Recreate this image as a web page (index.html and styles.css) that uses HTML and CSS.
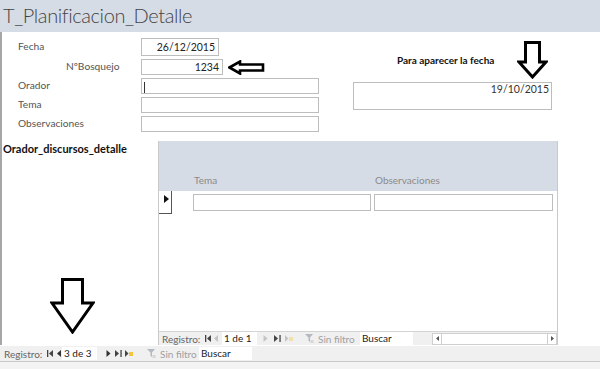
FILE: index.html
```html
<!DOCTYPE html>
<html lang="es">
<head>
  <meta charset="UTF-8" />
  <title>T_Planificacion_Detalle</title>
  <link rel="stylesheet" href="styles.css">
</head>
<body>
  <div class="window">
    <header class="title">T_Planificacion_Detalle</header>

    <main class="form">
      <!-- Cabecera del formulario -->
      <section class="top">
        <div class="fields">
          <div class="row row-tall">
            <label class="lbl">Fecha</label>
            <div class="box w-fecha num">26/12/2015</div>
          </div>
          <div class="row">
            <label class="lbl lbl-indent">NºBosquejo</label>
            <div class="box w-bosq num">1234</div>
          </div>
          <div class="row">
            <label class="lbl">Orador</label>
            <div class="box w-long focus"><span class="caret"></span></div>
          </div>
          <div class="row">
            <label class="lbl">Tema</label>
            <div class="box w-long"></div>
          </div>
          <div class="row">
            <label class="lbl">Observaciones</label>
            <div class="box w-long"></div>
          </div>
        </div>

        <div class="date-note">
          <div class="note-title">Para aparecer la fecha</div>
          <div class="note-box">19/10/2015</div>
        </div>

        <svg class="arrow arrow-left" width="37" height="15" viewBox="0 0 37 15">
          <path d="M1.5 7.5 L12 1.5 V4.5 H35 V10.5 H12 V13.5 Z" fill="#fff" stroke="#000" stroke-width="2.6"/>
        </svg>
        <svg class="arrow arrow-date" width="31" height="38" viewBox="0 0 31 38">
          <path d="M8.5 1.5 H22.5 V21 H29 L15.5 36 L2 21 H8.5 Z" fill="#fff" stroke="#000" stroke-width="3"/>
        </svg>
      </section>

      <!-- Subformulario -->
      <section class="detail">
        <h2 class="sub-label">Orador_discursos_detalle</h2>

        <div class="subform">
          <div class="sub-head">
            <span class="col-tema">Tema</span>
            <span class="col-obs">Observaciones</span>
          </div>
          <div class="sub-row">
            <div class="selector">
              <svg width="5" height="8" viewBox="0 0 5 8"><path d="M0 0 L5 4 L0 8 Z" fill="#111"/></svg>
            </div>
            <div class="cell cell-tema"></div>
            <div class="cell cell-obs"></div>
          </div>
          <div class="sub-space"></div>

          <div class="navbar sub-nav">
            <span class="nav-text">Registro:</span>
            <svg class="ico i-first" width="6" height="7" viewBox="0 0 6 7"><rect x="0" y="0" width="1.3" height="7" fill="#444"/><path d="M6 0 L2 3.5 L6 7 Z" fill="#444"/></svg>
            <svg class="ico i-prev" width="4" height="7" viewBox="0 0 4 7"><path d="M4 0 L0 3.5 L4 7 Z" fill="#c4c4c4"/></svg>
            <span class="nav-input w-rec">1 de 1</span>
            <svg class="ico i-next" width="5" height="7" viewBox="0 0 5 7"><path d="M0.5 0 L4.5 3.5 L0.5 7 Z" fill="#c4c4c4"/></svg>
            <svg class="ico i-last" width="7" height="7" viewBox="0 0 7 7"><path d="M0 0 L4 3.5 L0 7 Z" fill="#444"/><rect x="5.4" y="0" width="1.3" height="7" fill="#444"/></svg>
            <svg class="ico i-new" width="8" height="7" viewBox="0 0 8 7"><path d="M0 0 L3.5 3.5 L0 7 Z" fill="#c4c4c4"/><rect x="4" y="2" width="4" height="4" fill="#f1dfae"/></svg>
            <svg class="ico i-filter" width="9" height="9" viewBox="0 0 9 9"><path d="M0 0 H8 L5 3.5 V8 L3.5 7 V3.5 Z" fill="#b4b8c0"/><path d="M5.5 6 L8.5 9 M8.5 6 L5.5 9" stroke="#c4c4c4" stroke-width="1"/></svg>
            <span class="nav-text off-text">Sin filtro</span>
            <span class="nav-input w-search">Buscar</span>
            <span class="scroll">
              <span class="scroll-btn"><svg width="3" height="5" viewBox="0 0 3 5"><path d="M3 0 L0 2.5 L3 5 Z" fill="#555"/></svg></span>
              <span class="scroll-track"></span>
              <span class="scroll-btn"><svg width="3" height="5" viewBox="0 0 3 5"><path d="M0 0 L3 2.5 L0 5 Z" fill="#555"/></svg></span>
            </span>
          </div>
        </div>

        <svg class="arrow arrow-nav" width="45" height="56" viewBox="0 0 45 56">
          <path d="M12.5 1.5 H32.5 V25 H43 L22.5 54 L2 25 H12.5 Z" fill="#fff" stroke="#000" stroke-width="3"/>
        </svg>
      </section>
    </main>

    <footer class="navbar main-nav">
      <span class="nav-text">Registro:</span>
      <svg class="ico i-first" width="6" height="7" viewBox="0 0 6 7"><rect x="0" y="0" width="1.3" height="7" fill="#444"/><path d="M6 0 L2 3.5 L6 7 Z" fill="#444"/></svg>
      <svg class="ico i-prev" width="4" height="7" viewBox="0 0 4 7"><path d="M4 0 L0 3.5 L4 7 Z" fill="#333"/></svg>
      <span class="nav-input w-rec">3 de 3</span>
      <svg class="ico i-next" width="5" height="7" viewBox="0 0 5 7"><path d="M0.5 0 L4.5 3.5 L0.5 7 Z" fill="#333"/></svg>
      <svg class="ico i-last" width="7" height="7" viewBox="0 0 7 7"><path d="M0 0 L4 3.5 L0 7 Z" fill="#444"/><rect x="5.4" y="0" width="1.3" height="7" fill="#444"/></svg>
      <svg class="ico i-new" width="8" height="7" viewBox="0 0 8 7"><path d="M0 0 L3.5 3.5 L0 7 Z" fill="#444"/><rect x="4" y="2" width="4" height="4" fill="#f2c53d"/></svg>
      <svg class="ico i-filter" width="9" height="9" viewBox="0 0 9 9"><path d="M0 0 H8 L5 3.5 V8 L3.5 7 V3.5 Z" fill="#b4b8c0"/><path d="M5.5 6 L8.5 9 M8.5 6 L5.5 9" stroke="#c4c4c4" stroke-width="1"/></svg>
      <span class="nav-text off-text">Sin filtro</span>
      <span class="nav-input w-search">Buscar</span>
    </footer>
    <div class="status"></div>
  </div>
</body>
</html>
```

FILE: styles.css
```css
html, body {
  margin: 0;
  padding: 0;
  background: #fff;
}
body {
  font-family: Lato, "Open Sans", sans-serif;
  color: #333;
}
.window {
  width: 600px;
  height: 369px;
  overflow: hidden;
  display: flex;
  flex-direction: column;
}

/* titulo */
.title {
  height: 32px;
  background: #d6dce5;
  font-size: 20px;
  font-weight: 300;
  letter-spacing: -0.4px;
  color: #444;
  padding-left: 3px;
  line-height: 30px;
  box-sizing: border-box;
}

.form {
  border-left: 2px solid #a6a6a6;
  height: 313px;
  display: flex;
  flex-direction: column;
}

/* campos superiores */
.top {
  position: relative;
  height: 109px;
  display: flex;
}
.fields {
  padding-top: 6px;
  display: flex;
  flex-direction: column;
  gap: 3px;
}
.row {
  display: flex;
  align-items: center;
  height: 16px;
}
.row-tall {
  height: 18px;
}
.lbl {
  width: 123px;
  padding-left: 16px;
  font-size: 10.2px;
  color: #555;
  margin-top: -3px;
}
.lbl-indent {
  width: 75px;
  padding-left: 64px;
}
.box {
  height: 100%;
  box-sizing: border-box;
  border: 1px solid #bdbdbd;
  background: #fff;
  font-size: 10.5px;
  color: #222;
  padding: 0 3px;
  line-height: 15px;
}
.row-tall .box {
  line-height: 17px;
}
.num {
  text-align: right;
}
.w-fecha { width: 78px; }
.w-bosq { width: 82px; }
.w-long { width: 178px; }
.caret {
  display: inline-block;
  width: 1px;
  height: 11px;
  background: #333;
  vertical-align: middle;
  margin-left: -1px;
}

.date-note {
  margin-left: 34px;
  padding-top: 22px;
  width: 199px;
}
.note-title {
  font-size: 10px;
  font-weight: bold;
  color: #111;
  padding-left: 44px;
  height: 12px;
  line-height: 12px;
}
.note-box {
  margin-top: 16px;
  height: 28px;
  box-sizing: border-box;
  border: 1px solid #bdbdbd;
  text-align: right;
  font-size: 10.5px;
  color: #333;
  padding: 0 2px 0 0;
}

.arrow {
  position: absolute;
}
.arrow-left {
  left: 226px;
  top: 28px;
}
.arrow-date {
  left: 515px;
  top: 9px;
}
.arrow-nav {
  left: 48px;
  top: 137px;
}

/* subformulario */
.detail {
  position: relative;
  flex: 1;
  display: flex;
}
.sub-label {
  margin: 0;
  width: 155px;
  padding-left: 1px;
  padding-top: 1px;
  font-size: 11px;
  font-weight: bold;
  color: #111;
}
.subform {
  width: 400px;
  display: flex;
  flex-direction: column;
  border-left: 1px solid #c9c9c9;
  border-right: 1px solid #c9c9c9;
  box-sizing: border-box;
}
.sub-head {
  height: 50px;
  background: #d6dce5;
  display: flex;
  align-items: flex-end;
  font-size: 10px;
  color: #8a8a8a;
  padding-bottom: 5px;
  box-sizing: border-box;
}
.col-tema {
  margin-left: 35px;
  width: 181px;
}
.sub-row {
  height: 23px;
  display: flex;
  align-items: center;
}
.selector {
  width: 13px;
  height: 23px;
  box-sizing: border-box;
  border-right: 1px solid #555;
  border-bottom: 1px solid #555;
  padding: 4px 0 0 5px;
}
.selector svg {
  display: block;
}
.cell {
  height: 17px;
  box-sizing: border-box;
  border: 1px solid #bdbdbd;
}
.cell-tema {
  margin-left: 21px;
  width: 178px;
}
.cell-obs {
  margin-left: 3px;
  width: 179px;
}
.sub-space {
  flex: 1;
}

/* barras de navegacion */
.navbar {
  display: flex;
  align-items: center;
  background: #f0f0f0;
  font-size: 10px;
  color: #666;
  box-sizing: border-box;
  white-space: nowrap;
}
.sub-nav {
  height: 14px;
  border-top: 1px solid #d4d4d4;
  padding-left: 3px;
}
.main-nav {
  height: 15px;
  margin-top: 1px;
  padding-left: 4px;
}
.nav-text {
  width: 41px;
  flex: none;
}
.ico {
  flex: none;
  display: block;
}
.i-first { margin-left: 2px; }
.i-prev { margin-left: 3px; }
.i-next { margin-left: 6px; }
.i-last { margin-left: 6px; }
.i-new { margin-left: 4px; }
.i-filter { margin-left: 12px; }
.main-nav .i-first { margin-left: 2px; }
.main-nav .i-prev { margin-left: 4px; }
.main-nav .nav-input.w-rec { margin-left: 1px; }
.main-nav .i-next { margin-left: 9px; }
.main-nav .i-last { margin-left: 4px; }
.main-nav .i-new { margin-left: 3px; }
.main-nav .i-filter { margin-left: 14px; }
.nav-input {
  flex: none;
  background: #fff;
  color: #222;
  height: 13px;
  line-height: 13px;
  padding-left: 2px;
  box-sizing: border-box;
}
.w-rec {
  width: 35px;
  margin-left: 4px;
}
.w-search {
  width: 53px;
  margin-left: 4px;
}
.off-text {
  margin-left: 4px;
  width: 38px;
  color: #a0a0a0;
}
.main-nav .off-text {
  width: 35px;
}
.scroll {
  margin-left: 19px;
  width: 125px;
  height: 12px;
  display: flex;
  border: 1px solid #cfcfcf;
  background: #fff;
  box-sizing: border-box;
}
.scroll-btn {
  width: 8px;
  display: flex;
  align-items: center;
  justify-content: center;
  border-right: 1px solid #cfcfcf;
}
.scroll-btn:last-child {
  border-right: none;
  border-left: 1px solid #cfcfcf;
}
.scroll-track {
  flex: 1;
}
.status {
  flex: 1;
  border-top: 1px solid #c8c8c8;
  background: #f3f3f3;
}
```
